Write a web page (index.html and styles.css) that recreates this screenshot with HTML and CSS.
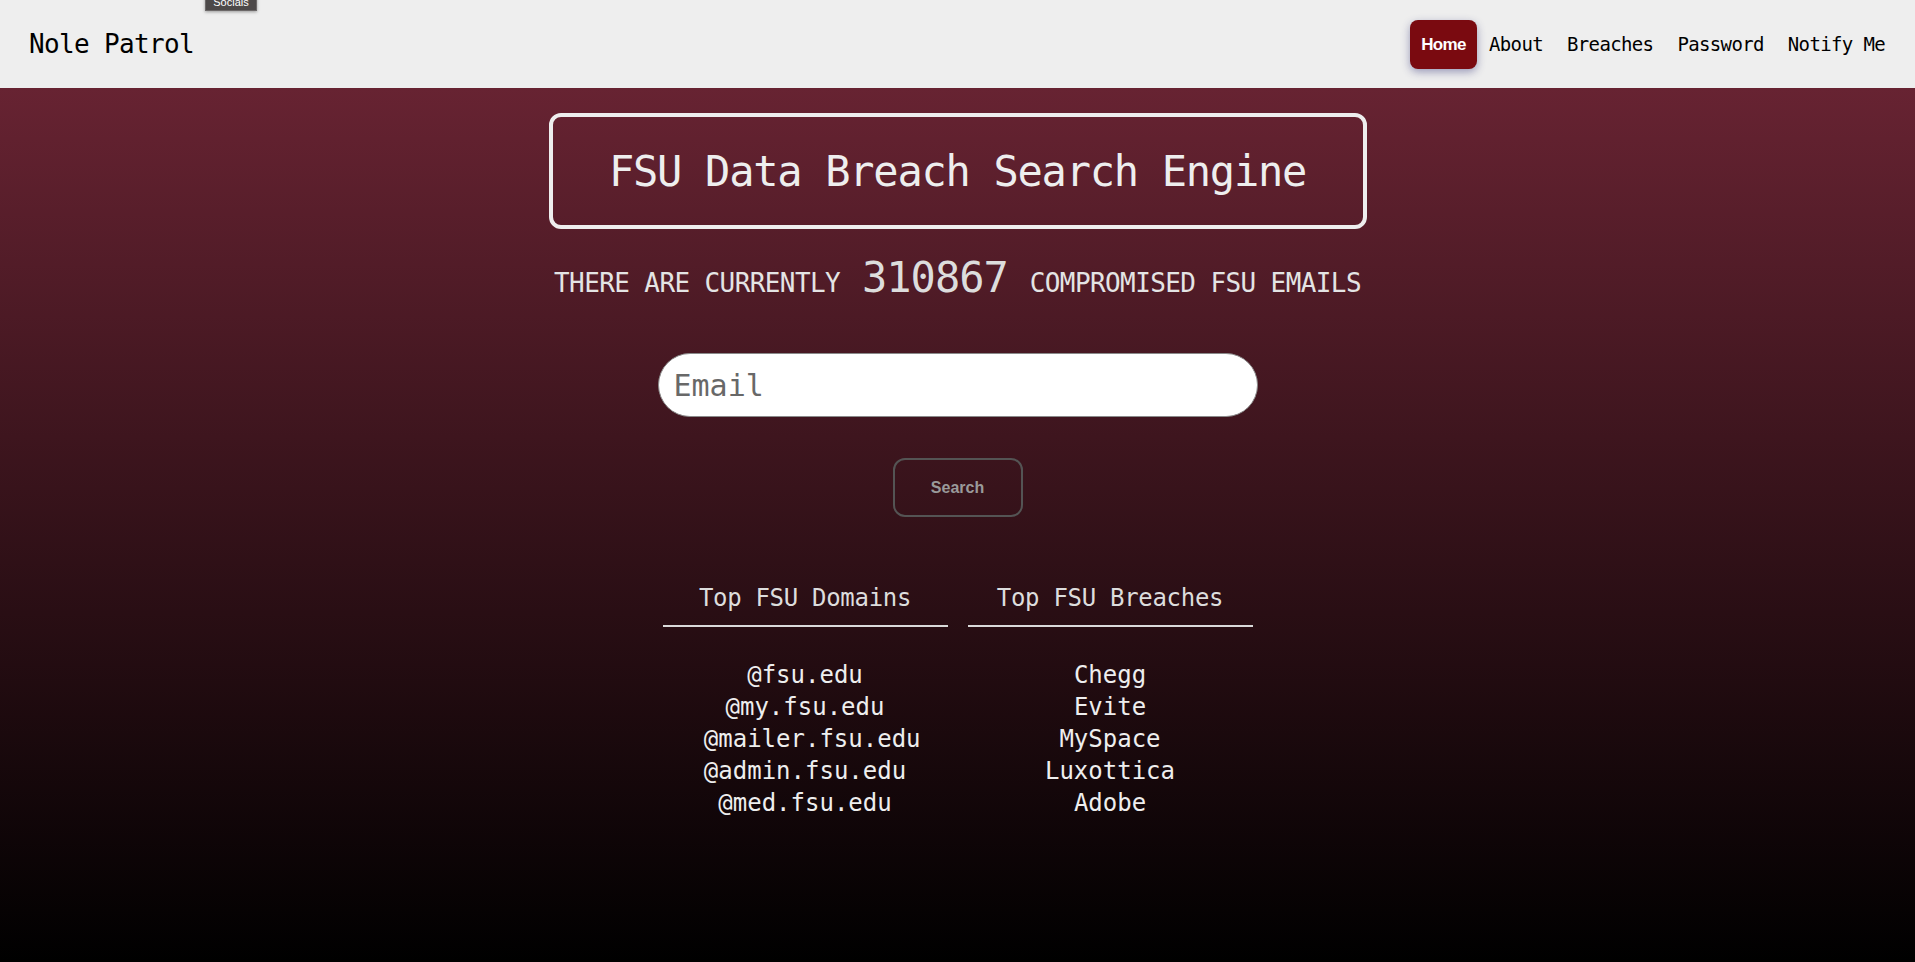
FILE: index.html
```html
<!DOCTYPE html>
<html lang="en">
<head>
<meta charset="utf-8">
<title>Nole Patrol</title>
<link rel="stylesheet" href="styles.css">
</head>
<body>
<header class="topbar">
  <a class="brand" href="#">Nole Patrol</a>
  <span class="tooltip">Socials</span>
  <nav class="nav">
    <a class="nav-link active" href="#">Home</a>
    <a class="nav-link" href="#">About</a>
    <a class="nav-link" href="#">Breaches</a>
    <a class="nav-link" href="#">Password</a>
    <a class="nav-link" href="#">Notify Me</a>
  </nav>
</header>
<main class="hero">
  <h1 class="title-box">FSU Data Breach Search Engine</h1>
  <p class="stats">
    <span class="stats-label">THERE ARE CURRENTLY</span>
    <span class="stats-count">310867</span>
    <span class="stats-label">COMPROMISED FSU EMAILS</span>
  </p>
  <form class="search-form" onsubmit="return false">
    <input class="email-input" type="email" placeholder="Email">
    <button class="search-btn" type="submit">Search</button>
  </form>
  <section class="tops">
    <div class="top-col">
      <h2 class="top-heading">Top FSU Domains</h2>
      <ul class="top-list">
        <li>@fsu.edu</li>
        <li>@my.fsu.edu</li>
        <li class="lead-space">@mailer.fsu.edu</li>
        <li>@admin.fsu.edu</li>
        <li>@med.fsu.edu</li>
      </ul>
    </div>
    <div class="top-col">
      <h2 class="top-heading">Top FSU Breaches</h2>
      <ul class="top-list">
        <li>Chegg</li>
        <li>Evite</li>
        <li>MySpace</li>
        <li>Luxottica</li>
        <li>Adobe</li>
      </ul>
    </div>
  </section>
</main>
</body>
</html>
```

FILE: styles.css
```css
* {
  box-sizing: border-box;
}

html, body {
  margin: 0;
  padding: 0;
}

body {
  min-height: 100vh;
  display: flex;
  flex-direction: column;
  font-family: "DejaVu Sans Mono", monospace;
  background: #000;
}

.topbar {
  position: relative;
  height: 88px;
  flex: 0 0 88px;
  display: flex;
  align-items: center;
  justify-content: space-between;
  padding: 0 18px 0 29px;
  background: #eeeeee;
}

.brand {
  color: #000;
  text-decoration: none;
  font-size: 26px;
  letter-spacing: -0.65px;
}

.tooltip {
  position: absolute;
  left: 205px;
  top: -6px;
  width: 52px;
  height: 17px;
  background: #4d4949;
  border: 1px solid #6c6868;
  box-shadow: 0 1px 3px rgba(0, 0, 0, 0.35);
  color: #fff;
  font-family: "Liberation Sans", Arial, sans-serif;
  font-size: 11px;
  line-height: 15px;
  text-align: center;
}

.nav {
  display: flex;
  align-items: center;
}

.nav-link {
  height: 49px;
  display: flex;
  align-items: center;
  padding: 0 12px;
  color: #000;
  text-decoration: none;
  font-size: 19px;
  letter-spacing: -0.64px;
  border-radius: 8px;
}

.nav-link.active {
  width: 67px;
  justify-content: center;
  padding: 1px 0 0;
  background: #7a0a10;
  color: #fff;
  font-family: "Liberation Sans", Arial, sans-serif;
  font-weight: bold;
  font-size: 17px;
  letter-spacing: -0.7px;
  box-shadow: 0 3px 9px rgba(50, 50, 120, 0.45);
}

.hero {
  flex: 1;
  display: flex;
  flex-direction: column;
  align-items: center;
  padding: 25px 0 40px;
  background: linear-gradient(180deg, #672332 0%, #000 100%);
  color: #eee;
}

.title-box {
  width: 818px;
  height: 116px;
  margin: 0;
  display: flex;
  align-items: center;
  justify-content: center;
  border: 4px solid #eeeeee;
  border-radius: 12px;
  font-weight: normal;
  font-size: 42px;
  letter-spacing: -1.25px;
  color: #eeeeee;
}

.stats {
  margin: 24px 0 0;
  display: flex;
  align-items: baseline;
  line-height: normal;
}

.stats-label {
  font-size: 26px;
  letter-spacing: -0.6px;
  color: #e4e4e4;
}

.stats-count {
  margin: 0 22px;
  font-size: 42px;
  letter-spacing: -1px;
  color: #dddddd;
}

.search-form {
  margin: 51px 0 0;
  display: flex;
  flex-direction: column;
  align-items: center;
}

.email-input {
  width: 600px;
  height: 64px;
  padding: 0 15px;
  border: 1px solid #8a8a8a;
  border-radius: 32px;
  background: #fff;
  font-family: "DejaVu Sans Mono", monospace;
  font-size: 30px;
  color: #333;
  outline: none;
}

.email-input::placeholder {
  color: #686868;
}

.search-btn {
  margin-top: 41px;
  width: 130px;
  height: 59px;
  border: 2px solid #545454;
  border-radius: 12px;
  background: transparent;
  color: #9a9a9a;
  font-family: "Liberation Sans", Arial, sans-serif;
  font-weight: bold;
  font-size: 16px;
  cursor: pointer;
}

.tops {
  margin-top: 67px;
  display: flex;
  gap: 20px;
}

.top-col {
  width: 285px;
  text-align: center;
}

.top-heading {
  margin: 0;
  padding-bottom: 13px;
  border-bottom: 2px solid #d9d9d9;
  font-weight: normal;
  font-size: 24px;
  letter-spacing: -0.3px;
  line-height: normal;
  color: #dddddd;
}

.top-list {
  list-style: none;
  margin: 32px 0 0;
  padding: 0;
  font-size: 24px;
  line-height: 32px;
  color: #eeeeee;
}

.top-list .lead-space {
  padding-left: 0.6em;
}
```
